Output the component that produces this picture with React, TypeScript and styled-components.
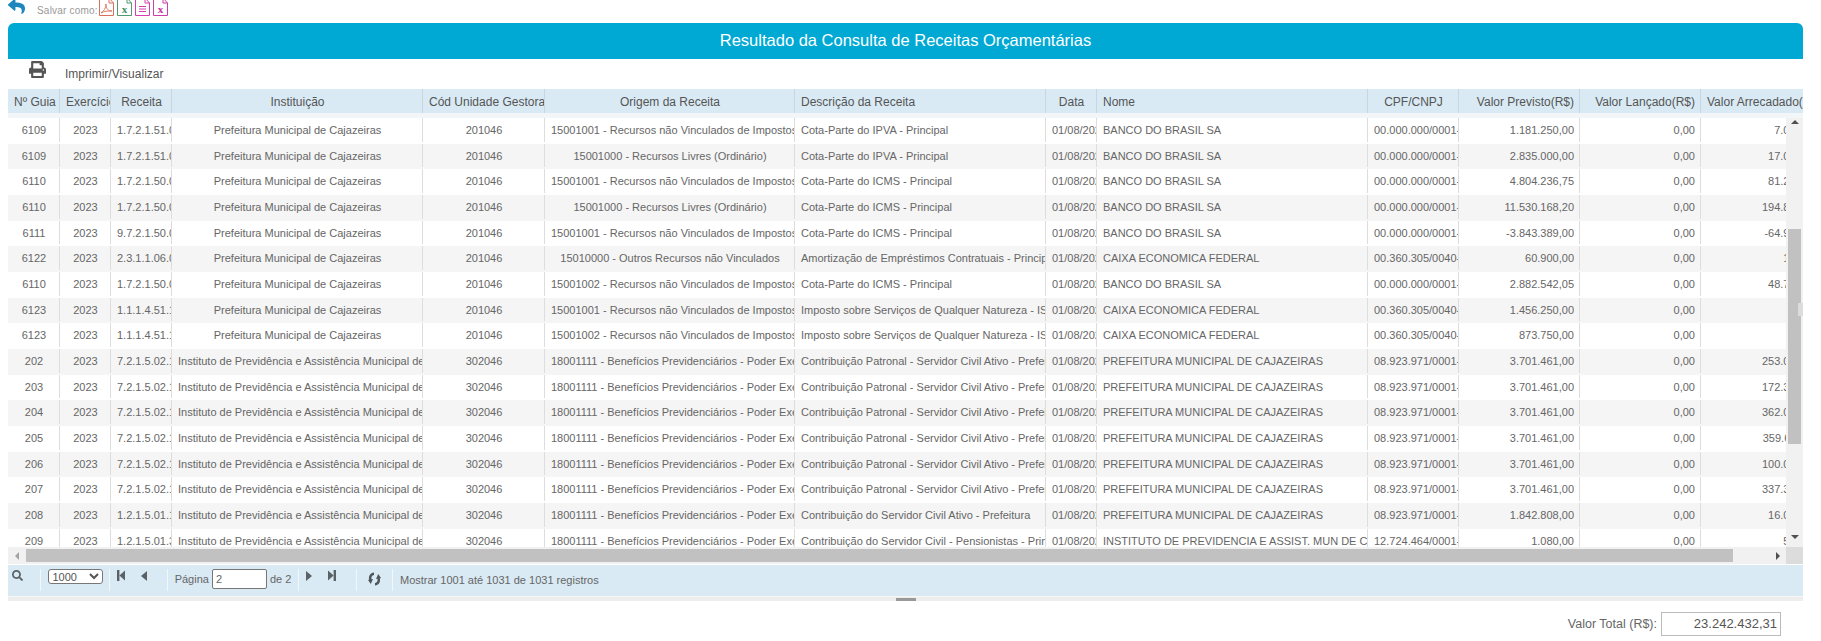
import React from 'react';
import styled, { createGlobalStyle } from 'styled-components';
import { FaPrint, FaReply, FaSearch } from 'react-icons/fa';

type Align = 'left' | 'center' | 'right';

interface Receita {
  guia: string;
  codigo: string;
  origem: string;
  descricao: string;
  nome: string;
  cnpj: string;
  previsto: string;
  arrecadado: string;
}

const PREFEITURA = 'Prefeitura Municipal de Cajazeiras';
const INSTITUTO = 'Instituto de Previdência e Assistência Municipal de Cajazeiras';
const IMPOSTOS_1 = '15001001 - Recursos não Vinculados de Impostos';
const IMPOSTOS_2 = '15001002 - Recursos não Vinculados de Impostos';
const LIVRES = '15001000 - Recursos Livres (Ordinário)';
const BENEFICIOS = '18001111 - Benefícios Previdenciários - Poder Executivo';
const BB = 'BANCO DO BRASIL SA';
const CAIXA = 'CAIXA ECONOMICA FEDERAL';
const PMC = 'PREFEITURA MUNICIPAL DE CAJAZEIRAS';
const PATRONAL = 'Contribuição Patronal - Servidor Civil Ativo - Prefeitura';

const receitas: Receita[] = [
  { guia: '6109', codigo: '1.7.2.1.51.0.1', origem: IMPOSTOS_1, descricao: 'Cota-Parte do IPVA - Principal', nome: BB, cnpj: '00.000.000/0001-91', previsto: '1.181.250,00', arrecadado: '7.087,50' },
  { guia: '6109', codigo: '1.7.2.1.51.0.1', origem: LIVRES, descricao: 'Cota-Parte do IPVA - Principal', nome: BB, cnpj: '00.000.000/0001-91', previsto: '2.835.000,00', arrecadado: '17.010,00' },
  { guia: '6110', codigo: '1.7.2.1.50.0.1', origem: IMPOSTOS_1, descricao: 'Cota-Parte do ICMS - Principal', nome: BB, cnpj: '00.000.000/0001-91', previsto: '4.804.236,75', arrecadado: '81.272,02' },
  { guia: '6110', codigo: '1.7.2.1.50.0.1', origem: LIVRES, descricao: 'Cota-Parte do ICMS - Principal', nome: BB, cnpj: '00.000.000/0001-91', previsto: '11.530.168,20', arrecadado: '194.853,84' },
  { guia: '6111', codigo: '9.7.2.1.50.0.1', origem: IMPOSTOS_1, descricao: 'Cota-Parte do ICMS - Principal', nome: BB, cnpj: '00.000.000/0001-91', previsto: '-3.843.389,00', arrecadado: '-64.951,28' },
  { guia: '6122', codigo: '2.3.1.1.06.0.1', origem: '15010000 - Outros Recursos não Vinculados', descricao: 'Amortização de Empréstimos Contratuais - Principal', nome: CAIXA, cnpj: '00.360.305/0040-40', previsto: '60.900,00', arrecadado: '105,00' },
  { guia: '6110', codigo: '1.7.2.1.50.0.1', origem: IMPOSTOS_2, descricao: 'Cota-Parte do ICMS - Principal', nome: BB, cnpj: '00.000.000/0001-91', previsto: '2.882.542,05', arrecadado: '48.763,21' },
  { guia: '6123', codigo: '1.1.1.4.51.1.1', origem: IMPOSTOS_1, descricao: 'Imposto sobre Serviços de Qualquer Natureza - ISS', nome: CAIXA, cnpj: '00.360.305/0040-40', previsto: '1.456.250,00', arrecadado: '21,40' },
  { guia: '6123', codigo: '1.1.1.4.51.1.1', origem: IMPOSTOS_2, descricao: 'Imposto sobre Serviços de Qualquer Natureza - ISS', nome: CAIXA, cnpj: '00.360.305/0040-40', previsto: '873.750,00', arrecadado: '12,84' },
  { guia: '202', codigo: '7.2.1.5.02.1.1', origem: BENEFICIOS, descricao: PATRONAL, nome: PMC, cnpj: '08.923.971/0001-15', previsto: '3.701.461,00', arrecadado: '253.014,32' },
  { guia: '203', codigo: '7.2.1.5.02.1.1', origem: BENEFICIOS, descricao: PATRONAL, nome: PMC, cnpj: '08.923.971/0001-15', previsto: '3.701.461,00', arrecadado: '172.341,08' },
  { guia: '204', codigo: '7.2.1.5.02.1.1', origem: BENEFICIOS, descricao: PATRONAL, nome: PMC, cnpj: '08.923.971/0001-15', previsto: '3.701.461,00', arrecadado: '362.012,47' },
  { guia: '205', codigo: '7.2.1.5.02.1.1', origem: BENEFICIOS, descricao: PATRONAL, nome: PMC, cnpj: '08.923.971/0001-15', previsto: '3.701.461,00', arrecadado: '359.640,11' },
  { guia: '206', codigo: '7.2.1.5.02.1.1', origem: BENEFICIOS, descricao: PATRONAL, nome: PMC, cnpj: '08.923.971/0001-15', previsto: '3.701.461,00', arrecadado: '100.027,55' },
  { guia: '207', codigo: '7.2.1.5.02.1.1', origem: BENEFICIOS, descricao: PATRONAL, nome: PMC, cnpj: '08.923.971/0001-15', previsto: '3.701.461,00', arrecadado: '337.318,90' },
  { guia: '208', codigo: '1.2.1.5.01.1.1', origem: BENEFICIOS, descricao: 'Contribuição do Servidor Civil Ativo - Prefeitura', nome: PMC, cnpj: '08.923.971/0001-15', previsto: '1.842.808,00', arrecadado: '16.084,21' },
  { guia: '209', codigo: '1.2.1.5.01.3.1', origem: BENEFICIOS, descricao: 'Contribuição do Servidor Civil - Pensionistas - Principal', nome: 'INSTITUTO DE PREVIDENCIA E ASSIST. MUN DE CAJAZEIRAS', cnpj: '12.724.464/0001-20', previsto: '1.080,00', arrecadado: '540,00' }
];

const colunas: { titulo: string; align: Align }[] = [
  { titulo: 'Nº Guia', align: 'center' },
  { titulo: 'Exercício', align: 'center' },
  { titulo: 'Receita', align: 'center' },
  { titulo: 'Instituição', align: 'center' },
  { titulo: 'Cód Unidade Gestora', align: 'center' },
  { titulo: 'Origem da Receita', align: 'center' },
  { titulo: 'Descrição da Receita', align: 'left' },
  { titulo: 'Data', align: 'center' },
  { titulo: 'Nome', align: 'left' },
  { titulo: 'CPF/CNPJ', align: 'center' },
  { titulo: 'Valor Previsto(R$)', align: 'right' },
  { titulo: 'Valor Lançado(R$)', align: 'right' },
  { titulo: 'Valor Arrecadado(R$)', align: 'right' }
];

const FileIcon: React.FC<{ color: string; children: React.ReactNode }> = ({ color, children }) => (
  <svg width="15" height="16" viewBox="0 0 15 16" fill="none" stroke={color}>
    <path d="M0.5 -2 H10 L14.5 3 V15.5 H0.5 Z" fill="#fff" />
    <path d="M10 -2 V3 H14.5" />
    {children}
  </svg>
);

const SkipIcon: React.FC<{ flip?: boolean }> = ({ flip }) => (
  <svg width="8" height="11" viewBox="0 0 8 11" fill="#5a6268" transform={flip ? 'scale(-1 1)' : undefined}>
    <rect x="0" y="0" width="2.4" height="11" />
    <path d="M8 0.5 V10.5 L2.4 5.5 Z" />
  </svg>
);

const RefreshIcon: React.FC = () => (
  <svg width="13" height="14" viewBox="0 0 13 14" fill="#4f575d">
    <path d="M6 0.6 C2.2 1 0.2 4.2 1.2 7.6 L0 8 L2.8 12 L5 7 L3.6 7.2 C3 5.2 3.9 3.4 6 3 Z" />
    <path d="M7 13.4 C10.8 13 12.8 9.8 11.8 6.4 L13 6 L10.2 2 L8 7 L9.4 6.8 C10 8.8 9.1 10.6 7 11 Z" />
  </svg>
);

const App: React.FC = () => {
  return (
    <>
      <GlobalStyle />
      <TopBar>
        <BackLink>
          <FaReply size={17} color="#1c86bd" />
        </BackLink>
        <SaveLabel>Salvar como:</SaveLabel>
        <SaveIcons>
          <FileIcon color="#d9705a">
            <path d="M2 13 C5 11 7 8 7 4 C7 9 9 11 13 11 C9 11 5 11 2 13 Z" strokeWidth="0.9" />
          </FileIcon>
          <FileIcon color="#4f9a6e">
            <FileGlyph x="7.5" y="13" fill="#3f8f60">x</FileGlyph>
          </FileIcon>
          <FileIcon color="#d63fb0">
            <path d="M4 6.5 H11 M4 9 H11 M4 11.5 H11" />
          </FileIcon>
          <FileIcon color="#cc3fa8">
            <FileGlyph x="7.5" y="13" fill="#c8309f">x</FileGlyph>
          </FileIcon>
        </SaveIcons>
      </TopBar>

      <Panel>
        <TitleBar>Resultado da Consulta de Receitas Orçamentárias</TitleBar>
        <PrintBar>
          <FaPrint size={17} color="#555" />
          <span>Imprimir/Visualizar</span>
        </PrintBar>

        <HeaderRow>
          {colunas.map((coluna) => (
            <HeaderCell key={coluna.titulo} $align={coluna.align}>
              {coluna.titulo}
            </HeaderCell>
          ))}
        </HeaderRow>
        <HeaderGap />

        <GridArea>
          <RowsClip>
            {receitas.map((r, index) => (
              <Row key={index} $odd={index % 2 === 1}>
                <Cell $align="center">{r.guia}</Cell>
                <Cell $align="center">2023</Cell>
                <Cell $align="left">{r.codigo}</Cell>
                <Cell $align="center">{r.guia.length === 4 ? PREFEITURA : INSTITUTO}</Cell>
                <Cell $align="center">{r.guia.length === 4 ? '201046' : '302046'}</Cell>
                <Cell $align="center">{r.origem}</Cell>
                <Cell $align="left">{r.descricao}</Cell>
                <Cell $align="center">01/08/2023</Cell>
                <Cell $align="left">{r.nome}</Cell>
                <Cell $align="center">{r.cnpj}</Cell>
                <Cell $align="right">{r.previsto}</Cell>
                <Cell $align="right">0,00</Cell>
                <LastCell $align="right">{r.arrecadado}</LastCell>
              </Row>
            ))}
          </RowsClip>
          <VScroll>
            <ArrowUp />
            <VThumb />
            <ArrowDown />
            <ScrollMark />
          </VScroll>
        </GridArea>

        <HScrollRow>
          <HScroll>
            <ArrowLeft />
            <HThumb />
            <ArrowRight />
          </HScroll>
          <ScrollCorner />
        </HScrollRow>

        <Pager>
          <PagerCell>
            <SearchSlot>
              <FaSearch size={11} color="#5a6268" />
            </SearchSlot>
          </PagerCell>
          <PagerCell>
            <PageSize defaultValue="1000">
              <option value="1000">1000</option>
            </PageSize>
          </PagerCell>
          <PagerNav>
            <SkipIcon />
            <TriLeft />
          </PagerNav>
          <PagerCell>
            <PageField>
              Página <PageInput readOnly value="2" /> de 2
            </PageField>
          </PagerCell>
          <PagerNav>
            <TriRight />
            <SkipIcon flip />
          </PagerNav>
          <PagerCell>
            <RefreshSlot>
              <RefreshIcon />
            </RefreshSlot>
          </PagerCell>
          <PagerInfo>Mostrar 1001 até 1031 de 1031 registros</PagerInfo>
        </Pager>
        <Splitter>
          <SplitterHandle />
        </Splitter>
      </Panel>

      <TotalRow>
        <span>Valor Total (R$):</span>
        <TotalBox>23.242.432,31</TotalBox>
      </TotalRow>
    </>
  );
};

export default App;

const GRID_COLUMNS = '52px 51px 61px 251px 122px 250px 251px 51px 271px 91px 121px 121px 126px';

const GlobalStyle = createGlobalStyle`
  html, body {
    margin: 0;
    padding: 0;
    height: 641px;
    overflow: hidden;
    background: #fff;
    font-family: "Liberation Sans", Arial, sans-serif;
  }
`;

const TopBar = styled.div`
  height: 23px;
  display: flex;
  align-items: flex-start;
  padding-left: 8px;
  overflow: hidden;
`;

const BackLink = styled.div`
  width: 29px;
  height: 16px;
  margin-top: -2px;
`;

const SaveLabel = styled.span`
  font-size: 10px;
  letter-spacing: 0.2px;
  color: #999;
  line-height: 21px;
  width: 62px;
`;

const SaveIcons = styled.div`
  display: flex;
  gap: 3px;
`;

const FileGlyph = styled.text`
  font-family: "Liberation Serif", serif;
  font-size: 11px;
  font-weight: 700;
  text-anchor: middle;
  stroke: none;
`;

const Panel = styled.div`
  margin-left: 8px;
  width: 1795px;
`;

const TitleBar = styled.div`
  height: 36px;
  line-height: 35px;
  background: #00a9d4;
  border-radius: 6px 6px 0 0;
  color: #fff;
  text-align: center;
  font-size: 16.5px;
`;

const PrintBar = styled.div`
  height: 30px;
  display: flex;
  align-items: flex-start;
  padding-left: 21px;
  font-size: 12px;
  color: #555;

  svg {
    margin-top: 2px;
  }

  span {
    margin-left: 19px;
    line-height: 30px;
  }
`;

const HeaderRow = styled.div`
  display: grid;
  grid-template-columns: ${GRID_COLUMNS};
  height: 24px;
  background: #d9eaf4;
  overflow: hidden;
`;

const HeaderCell = styled.div<{ $align: Align }>`
  padding: 1px 5px 0 6px;
  border-right: 1px solid #c9d6df;
  box-sizing: border-box;
  font-size: 12px;
  line-height: 24px;
  color: #555;
  white-space: nowrap;
  overflow: hidden;
  text-align: ${(p) => p.$align};
`;

const HeaderGap = styled.div`
  height: 5px;
  background: #f3f6f8;
`;

const GridArea = styled.div`
  display: flex;
  height: 429px;
`;

const RowsClip = styled.div`
  flex: 1;
  min-width: 0;
  overflow: hidden;
`;

const Row = styled.div<{ $odd: boolean }>`
  display: grid;
  grid-template-columns: ${GRID_COLUMNS};
  height: 25.67px;
  background: ${(p) => (p.$odd ? '#f5f5f5' : '#fff')};
`;

const Cell = styled.div<{ $align: Align }>`
  height: calc(100% - 2px);
  padding: 0 5px 0 6px;
  border-right: 1px solid #ddd;
  box-sizing: border-box;
  font-size: 11px;
  line-height: 25px;
  color: #666;
  white-space: nowrap;
  overflow: hidden;
  text-align: ${(p) => p.$align};
`;

const LastCell = styled(Cell)`
  padding-right: 9px;
`;

const VScroll = styled.div`
  position: relative;
  width: 17px;
  flex: none;
  display: flex;
  flex-direction: column;
  align-items: center;
  background: #f1f1f1;
`;

const ArrowUp = styled.div`
  width: 0;
  height: 0;
  margin-top: 2px;
  border-left: 4px solid transparent;
  border-right: 4px solid transparent;
  border-bottom: 4px solid #505050;
`;

const ArrowDown = styled.div`
  width: 0;
  height: 0;
  margin-top: 91px;
  border-left: 4px solid transparent;
  border-right: 4px solid transparent;
  border-top: 4px solid #505050;
`;

const VThumb = styled.div`
  width: 13px;
  height: 215px;
  margin-top: 105px;
  background: #c1c1c1;
`;

const ScrollMark = styled.div`
  position: absolute;
  right: 0;
  top: 185px;
  width: 5px;
  height: 13px;
  background: #dcdcdc;
`;

const HScrollRow = styled.div`
  display: flex;
  height: 17px;
  margin-bottom: 1px;
`;

const HScroll = styled.div`
  flex: 1;
  display: flex;
  align-items: center;
  background: #f1f1f1;
`;

const ScrollCorner = styled.div`
  width: 17px;
  background: #dcdcdc;
`;

const ArrowLeft = styled.div`
  width: 0;
  height: 0;
  margin-left: 7px;
  margin-right: 7px;
  border-top: 4px solid transparent;
  border-bottom: 4px solid transparent;
  border-right: 4px solid #a3a3a3;
`;

const ArrowRight = styled.div`
  width: 0;
  height: 0;
  margin-left: 43px;
  border-top: 4px solid transparent;
  border-bottom: 4px solid transparent;
  border-left: 4px solid #505050;
`;

const HThumb = styled.div`
  width: 1707px;
  height: 13px;
  background: #c1c1c1;
`;

const Pager = styled.div`
  display: grid;
  grid-template-columns: 33px 69px 58px 131px 58px 36px 1fr;
  align-items: start;
  height: 31px;
  padding-top: 4px;
  box-sizing: border-box;
  background: #d9eaf4;
  font-size: 11px;
  color: #666;
`;

const PagerCell = styled.div`
  height: 22px;
  display: flex;
  align-items: flex-start;
  justify-content: center;
  box-sizing: border-box;
  border-right: 1px solid #f1f6fa;
`;

const SearchSlot = styled.div`
  margin: 1px 13px 0 0;
`;

const PageSize = styled.select`
  width: 55px;
  height: 15px;
  padding: 0;
  border: 1px solid #777;
  border-radius: 3px;
  background: #fff;
  color: #555;
  font-family: inherit;
  font-size: 11px;
`;

const PagerNav = styled(PagerCell)`
  justify-content: flex-start;
  gap: 16px;
  padding: 1px 0 0 7px;
`;

const PageField = styled.div`
  display: flex;
  align-items: center;
  gap: 3px;
  white-space: nowrap;
`;

const PageInput = styled.input`
  width: 55px;
  height: 20px;
  padding: 0 3px;
  box-sizing: border-box;
  border: 1px solid #777;
  border-radius: 2px;
  font-family: inherit;
  font-size: 11px;
  color: #666;
`;

const TriLeft = styled.div`
  width: 0;
  height: 0;
  margin-top: 1px;
  border-top: 5px solid transparent;
  border-bottom: 5px solid transparent;
  border-right: 6px solid #5a6268;
`;

const TriRight = styled.div`
  width: 0;
  height: 0;
  margin-top: 1px;
  border-top: 5px solid transparent;
  border-bottom: 5px solid transparent;
  border-left: 6px solid #5a6268;
`;

const RefreshSlot = styled.div`
  margin-top: 3px;
`;

const PagerInfo = styled.div`
  padding-left: 7px;
  line-height: 22px;
`;

const Splitter = styled.div`
  height: 5px;
  border-top: 1px solid #f7f7f7;
  box-sizing: border-box;
  background: #eee;
  display: flex;
  justify-content: center;
`;

const SplitterHandle = styled.div`
  width: 20px;
  height: 3px;
  margin-top: 1px;
  background: #999;
`;

const TotalRow = styled.div`
  display: flex;
  justify-content: flex-end;
  align-items: center;
  gap: 4px;
  width: 1781px;
  margin-top: 11px;
  font-size: 12.5px;
  color: #666;
`;

const TotalBox = styled.div`
  width: 120px;
  height: 24px;
  box-sizing: border-box;
  padding-right: 3px;
  border: 1px solid #bbb;
  font-size: 13px;
  line-height: 22px;
  text-align: right;
  color: #555;
`;
